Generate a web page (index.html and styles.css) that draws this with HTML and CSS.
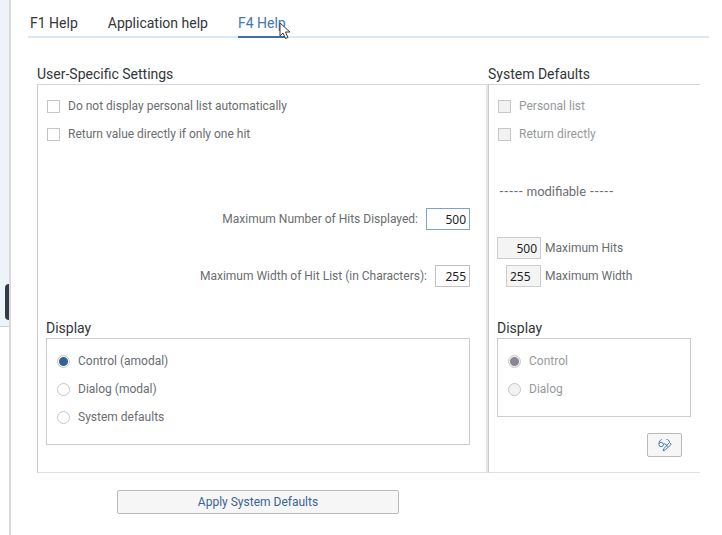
FILE: index.html
```html
<!DOCTYPE html>
<html lang="en">
<head>
<meta charset="utf-8">
<title>F4 Help</title>
<link rel="stylesheet" href="styles.css">
</head>
<body>
<div class="app">
  <div class="backdrop"><div class="page-edge"><div class="dark-button"></div></div></div>
  <main class="dialog">
    <nav class="tabs" role="tablist">
      <button class="tab" role="tab" type="button">F1 Help</button>
      <button class="tab" role="tab" type="button">Application help</button>
      <button class="tab active" role="tab" type="button" aria-selected="true">F4 Help
        <svg class="cursor" viewBox="0 0 12 18" aria-hidden="true"><path d="M1 1v13l3-3 2.500 5.500 2.500-1-2.500-5.500h4.500z" fill="#fff" stroke="#38383e" stroke-width="1"/></svg>
      </button>
    </nav>
    <form class="settings">
      <section class="column">
        <h2 class="title">User-Specific Settings</h2>
        <div class="panel user">
          <label class="row option"><input class="check" type="checkbox">Do not display personal list automatically</label>
          <label class="row option"><input class="check" type="checkbox">Return value directly if only one hit</label>
          <label class="row field hits">Maximum Number of Hits Displayed:<input class="num wide focused" type="text" value="500"></label>
          <label class="row field spaced">Maximum Width of Hit List (in Characters):<input class="num" type="text" value="255"></label>
          <h3 class="title display-title">Display</h3>
          <div class="box">
            <label class="row option"><input class="radio" type="radio" name="display" checked>Control (amodal)</label>
            <label class="row option"><input class="radio" type="radio" name="display">Dialog (modal)</label>
            <label class="row option"><input class="radio" type="radio" name="display">System defaults</label>
          </div>
        </div>
      </section>
      <section class="column">
        <h2 class="title">System Defaults</h2>
        <div class="panel system">
          <label class="row option off"><input class="check" type="checkbox" disabled>Personal list</label>
          <label class="row option off"><input class="check" type="checkbox" disabled>Return directly</label>
          <p class="row note spaced">----- modifiable -----</p>
          <label class="row default spaced"><input class="num wide" type="text" value="500" readonly>Maximum Hits</label>
          <label class="row default"><input class="num start" type="text" value="255" readonly>Maximum Width</label>
          <h3 class="title display-title">Display</h3>
          <div class="box">
            <label class="row option off"><input class="radio" type="radio" name="system-display" checked disabled>Control</label>
            <label class="row option off"><input class="radio" type="radio" name="system-display" disabled>Dialog</label>
          </div>
          <button class="button toggle" type="button" aria-label="Display or change">
            <svg viewBox="0 0 14 14" width="14" height="14" fill="none" stroke="#4a7eaf" aria-hidden="true"><circle cx="3.200" cy="6.500" r="2.200"/><path d="M1 6C1 3.500 2 2 3.800 1.500M5.400 6.500Q6.500 5.200 8 6.500M8.500 1.500c1.500-.3 2.500 1 3 2.500"/><path d="M5 12.800l1-2.300L11.500 4.500l1.800 1.800-6 5.500zM8 6.300c.3 1.500 1 2 2 2" /></svg>
          </button>
        </div>
      </section>
    </form>
    <button class="button apply" type="button">Apply System Defaults</button>
  </main>
</div>
</body>
</html>
```
FILE: styles.css
```css
* { box-sizing: border-box; }
body {
  margin: 0;
  background: #fff;
  color: #6a6d70;
  font: 12px/16px Roboto, "Open Sans", sans-serif;
}
button, input { font: inherit; margin: 0; }
.app { display: flex; min-height: 100vh; }
.backdrop { width: 9px; }
.page-edge {
  display: flex;
  justify-content: flex-end;
  background: #edf3f8;
  border-bottom: 1px solid #c9ced3;
  padding: 284px 0 6px;
}
.dark-button {
  width: 4px;
  height: 36px;
  background: #2f3c48;
  border-radius: 4px 0 0 4px;
}
.dialog {
  flex: 1;
  border-left: 2px solid #d9dadd;
  padding: 11px 13px 20px 17px;
}
.tabs {
  display: flex;
  gap: 30px;
  padding-left: 2px;
  border-bottom: 2px solid #dbe9f5;
}
.tab {
  position: relative;
  height: 27px;
  margin-bottom: -2px;
  padding: 0 0 1px;
  border: 0;
  border-bottom: 2px solid transparent;
  background: none;
  color: #32363a;
  font-size: 14px;
}
.tab.active { color: #4477ad; border-bottom-color: #3f6f9f; }
.cursor {
  position: absolute;
  left: 41px;
  top: 11px;
  width: 12px;
  height: 18px;
}
.settings {
  display: grid;
  grid-template-columns: minmax(0, 451fr) minmax(0, 212fr);
  margin: 26px 9px 0;
}
.column { display: flex; flex-direction: column; }
.title {
  margin: 0;
  height: 20px;
  color: #32363a;
  font-size: 14px;
  font-weight: 400;
  line-height: 20px;
}
.panel {
  flex: 1;
  padding: 7px 9px 27px 8px;
  border: 1px solid #c8cacb;
  border-top-color: #d5d6d7;
  border-bottom-color: #dfe1e1;
}
.user { border-right: 2px solid #e5e7e7; padding-right: 16px; }
.system { border-right: 0; padding-bottom: 14px; }
.row { display: flex; align-items: center; height: 28px; margin: 0; }
.option { gap: 8px; padding-left: 1px; }
.field { justify-content: flex-end; gap: 8px; }
.hits { margin-top: 57px; }
.spaced { margin-top: 29px; }
.note { padding-left: 2px; font-family: Lato, sans-serif; font-size: 13px; }
.default { gap: 4px; }
.off { color: #96999b; }
.display-title { margin-top: 28px; }
.box { border: 1px solid #ccc; padding: 8px 9px 13px; }
.check, .radio {
  appearance: none;
  width: 13px;
  height: 13px;
  border: 1px solid #c5c7c5;
  background: #fff;
}
.radio { border-radius: 50%; }
.check:disabled, .radio:disabled { background: #f2f2f2; }
.radio:checked { background: radial-gradient(circle, #346194 4px, #fff 5px); }
.radio:checked:disabled { background: radial-gradient(circle, #8b8594 4px, #f2f2f2 5px); }
.num {
  width: 35px;
  height: 22px;
  padding: 0 3px;
  border: 1px solid #bfc1c2;
  border-radius: 0;
  background: #fff;
  color: #1d1d1f;
  font-family: "Noto Sans", sans-serif;
  font-size: 12px;
  text-align: right;
}
.num.wide { width: 44px; }
.num.focused { border-color: #7ca3cd; }
.num:read-only { background: #f4f4f4; border-color: #ccc; }
.num.start { margin-left: 9px; text-align: left; }
.button {
  display: flex;
  align-items: center;
  justify-content: center;
  height: 24px;
  padding: 0;
  border: 1px solid #b8babb;
  border-radius: 2px;
  background: #f6f6f6;
  color: #3b6491;
}
.toggle { width: 35px; margin: 16px 9px 0 auto; }
.apply { width: 282px; margin: 17px 0 0 89px; }
```
